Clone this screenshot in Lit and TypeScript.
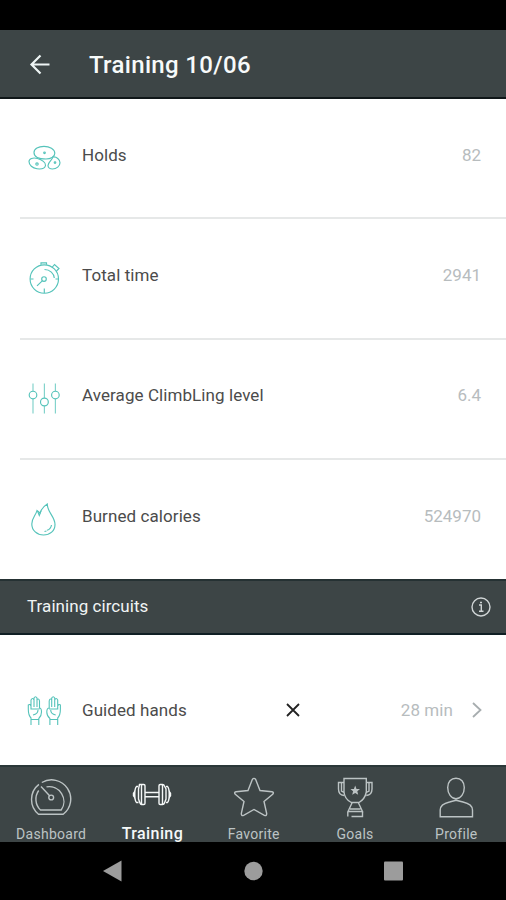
import { LitElement, html, svg, css } from "lit";
import { customElement, property } from "lit/decorators.js";

const icons: Record<string, unknown> = {
  holds: svg`
    <path d="M8 12.500C8 8.500 12.500 6.300 18 6.300S28.800 9 28.800 13.200C28.800 17 24.500 19 20 19C13.500 19 8 17 8 12.500Z"/>
    <path d="M3 21.500C3 18.500 7 17.300 11.500 18.500S20 22.500 19.500 25.500S15.500 29.300 11 28.800S3 25 3 21.500Z"/>
    <path d="M22 25.500C22 22 26.500 19.500 27 17C30.500 16.500 34 19.500 34 22.800S30.500 29 26.500 29C24 29 22 27.500 22 25.500Z"/>
    <circle cx="18.500" cy="12.800" r=".8"/><circle cx="11" cy="24" r="1.200"/><circle cx="29" cy="22.500" r=".8"/>`,
  watch: svg`
    <circle cx="18.300" cy="19" r="14.200"/><circle cx="18" cy="19" r="2.300"/>
    <path d="M16.300 20.800L11 25.800M4.500 19H7.500M18.300 28.500V33M29.500 19H32M15 4.800V2.800H20.500V4.800M26 7.500L28.500 4.500L33 8.500L30.500 11M18.500 9.500C24 9.500 28 13.500 28.300 18"/>`,
  sliders: svg`
    <path d="M7 3.500V11.200M7 18.800V33.500M18.400 3.500V18M18.400 26V33.500M29.400 3.500V11.200M29.400 18.800V33.500" opacity=".75"/>
    <circle cx="7" cy="15" r="3.800"/><circle cx="18.400" cy="22" r="3.900"/><circle cx="29.400" cy="15" r="3.800"/>`,
  flame: svg`
    <path d="M21.300 3C21 11 29 15.500 29 23.500C29 30 24 34 17.500 34S5.800 29.500 5.800 23C5.800 17 10 14 11 9.500L14 12C15.500 7.500 18 5 21.300 3Z"/>
    <path d="M11.500 10L13.300 14.500L15 10M25.500 24C25 27 23.500 28.500 21 29.300M20.500 30L18.500 30.500"/>`,
  hands: svg`
    <path d="M5 33V26C3 24 2.300 21 2.300 17V13Q4 11.500 5 14V8Q6.500 5 8 8V6Q9.500 3.500 11 6V7.500Q13 6 13.500 9V16Q15.500 16 15.500 20Q15.500 24 12.800 26.500V33M5 27.500H12.800M8 8V15M11 7V15M5 14V17H13.500M7 23Q12 22 12 18"/>
    <path d="M31.700 33V26C33.700 24 34.400 21 34.400 17V13Q33 11.500 31.700 14V8Q30.200 5 28.700 8V6Q27.200 3.500 25.700 6V7.500Q23.700 6 23.200 9V16Q20.800 16 20.800 20Q20.800 24 23.900 26.500V33M31.700 27.500H23.900M28.700 8V15M25.700 7V15M31.700 14V17H23.200M29.700 23Q24.700 22 24.700 18"/>`,
};

const tabIcons: Record<string, unknown> = {
  Dashboard: svg`
    <path d="M8.900 7.400A19.200 19.200 0 0 0 8.500 37.300H33.200A19.200 19.200 0 0 0 11.800 5.500"/>
    <path d="M8.700 13.500A15 15 0 0 0 10.500 33H31.200A14.800 14.800 0 0 0 16.500 9.900M11 9.500L19.600 18.700"/><circle cx="21.200" cy="20.500" r="2.400"/>`,
  Training: svg`
    <path d="M8.500 7.500H12.800Q14 7.500 14 8.700V26.300Q14 27.500 12.800 27.500H10.500Q9.500 27.500 9 26L7.500 22V12ZM28 8.700Q28 7.500 29.200 7.500H31.500Q33 7.500 33.500 9L35 12V22L33.500 26Q33 27.500 31.500 27.500H29.200Q28 27.500 28 26.300ZM14 15.500H28M14 19.800H28M10.500 8V27M31.500 8V27M7 9.500H5.500Q3.800 11 3.800 17.500T5.500 25.500H7.500M35 9.500H36.500Q38.200 11 38.200 17.500T36.500 25.500H35"/>
    <path class="solid" d="M4 13L1.800 16V19L4 22ZM38 13L40.200 16V19L38 22Z"/>`,
  Favorite: svg`
    <path d="M19.300 2.500Q21 .3 22.700 2.500L27 13.500L39 14.700Q41.400 15.200 39.700 17.200L31 24.500L33.700 36.500Q33.700 39.300 31.400 38.400L21 32.500L10.600 38.400Q8.300 39.300 8.300 36.500L11 24.500L2.300 17.200Q.6 15.200 3 14.700L15 13.500Z"/>`,
  Goals: svg`
    <path d="M10 1.500H32.300V15Q31 22 25 25.500H17.300Q10.500 22 10 15ZM10 5.500H4.500V12Q4.500 18 10 18.500M32.300 5.500H38V12Q38 18 32.300 18.500M18 26L14 34.500H28.500L24.500 26M13.800 34.500V39.500M17.500 39.500H28.500V34.500M16 32H26.500M7.500 5.500V14L10 15.500M35 5.500V14L32.300 15.500"/>
    <path class="solid" d="M21.200 8.500L22.500 11.900L26 12.100L23.300 14.300L24.200 17.800L21.200 15.900L18.200 17.800L19.100 14.300L16.400 12.100L19.900 11.900Z"/>`,
  Profile: svg`
    <path d="M21 1.200C26 1.200 29.300 5 29.300 10.500C29.300 16.500 25.800 21.800 21 21.800S12.700 16.500 12.700 10.500C12.700 5 16 1.200 21 1.200ZM14.500 25L21 23.300L28 25C34.500 26.500 37.500 28.500 37.500 33V39.800H5.200V33C5.200 28.500 8 26.500 14.500 25Z"/>`,
};

@customElement("stat-row")
class StatRow extends LitElement {
  @property() icon = "";
  @property() label = "";
  @property() value = "";
  static styles = css`
    :host { display: flex; box-sizing: border-box; height: 120.400px; padding-left: 20px; }
    .row { flex: 1; display: flex; align-items: center; padding: 0 25px 0 6px; border-bottom: 2px solid #e6e8e8; }
    svg { width: 36px; height: 36px; margin-bottom: 1px; fill: none; stroke: #55c3ba; stroke-width: 1.150; }
    .label { margin: 0 auto 7px 20px; font-size: 17px; letter-spacing: .08px; color: #4b4b4b; }
    .value { margin-bottom: 7px; font-size: 17px; letter-spacing: 0; color: #b7bcbe; }
  `;
  render() {
    return html`<div class="row">
      <svg viewBox="0 0 36 36">${icons[this.icon]}</svg>
      <span class="label">${this.label}</span><span class="value">${this.value}</span>
    </div>`;
  }
}

@customElement("app-root")
class AppRoot extends LitElement {
  static styles = css`
    :host { display: flex; flex-direction: column; height: 900px; overflow: hidden; background: #fff; font-family: Roboto, "Liberation Sans", sans-serif; }
    * { box-sizing: border-box; }
    svg { display: block; fill: none; }
    .status { height: 30px; background: #000; }
    .header { height: 69px; display: flex; align-items: center; padding: 0 0 0 28px; background: #3d4546; border-bottom: 2px solid #101719; color: #f7fafa; }
    .back { width: 24px; height: 24px; stroke: #eef4f4; stroke-width: 2.200; }
    .title { margin: 2px 0 0 37px; font-size: 24px; font-weight: 500; letter-spacing: .33px; line-height: 30px; }
    .stats { height: 480px; overflow: hidden; }
    .section { height: 56px; display: flex; align-items: center; justify-content: space-between; padding: 0 15px 2px 27px; background: #3d4546; border-top: 2px solid #253133; border-bottom: 2px solid #101f24; color: #f1f4f4; font-size: 17px; letter-spacing: .06px; }
    .info { width: 20px; height: 20px; margin-top: 2px; stroke: #d0d5d6; stroke-width: 1.400; }
    .circuit { height: 130px; display: grid; grid-template-columns: 36px 20px 1fr auto auto; align-items: center; padding: 19px 23px 0 26px; font-size: 17px; color: #4b4b4b; letter-spacing: .08px; }
    .hands { width: 36px; height: 36px; margin-top: 1px; stroke: #55c3ba; stroke-width: 1.100; }
    .name { grid-column: 3; display: flex; align-items: center; }
    .cross { width: 16px; height: 16px; stroke: #222; stroke-width: 1.800; margin-left: 98px; }
    .time { color: #b7bcbe; }
    .chevron { width: 12px; height: 18px; stroke: #a7adaf; stroke-width: 1.800; margin-left: 18px; }
    .tabs { height: 77px; display: grid; grid-template-columns: repeat(5, 101.300px); background: #3d4546; border-top: 2px solid #2b3839; }
    .tab { display: flex; flex-direction: column; align-items: center; color: #bcc3c4; font-size: 14px; letter-spacing: .28px; white-space: nowrap; }
    .tab svg { width: 42px; height: 42px; margin: 10px 0 0 1px; stroke: currentColor; stroke-width: 1.400; flex: none; }
    .tab .solid { fill: currentColor; stroke: none; }
    .tab span { margin: 6px 0 0 1px; line-height: 18px; }
    .tab.active { color: #f5f8f8; font-weight: 500; font-size: 16px; letter-spacing: .4px; }
    .nav { height: 58px; display: flex; justify-content: space-between; align-items: center; padding: 0 102px; background: #000; }
    .nav svg { width: 22px; height: 22px; fill: #9c9c9c; }
  `;

  render() {
    return html`
      <div class="status"></div>
      <header class="header">
        <svg class="back" viewBox="0 0 24 24"><path d="M21.500 12.500H3.500M12.500 3.500L3.500 12.500L12.500 21.500"/></svg>
        <span class="title">Training 10/06</span>
      </header>
      <section class="stats">
        <stat-row icon="holds" label="Holds" value="82"></stat-row>
        <stat-row icon="watch" label="Total time" value="2941"></stat-row>
        <stat-row icon="sliders" label="Average ClimbLing level" value="6.4"></stat-row>
        <stat-row icon="flame" label="Burned calories" value="524970"></stat-row>
      </section>
      <div class="section">
        <span>Training circuits</span>
        <svg class="info" viewBox="0 0 20 20"><circle cx="10" cy="10" r="9"/><path d="M8 8H10.300V14M8 14.300H12.500M9 5.500H11" /></svg>
      </div>
      <div class="circuit">
        <svg class="hands" viewBox="0 0 36 36">${icons.hands}</svg>
        <span class="name">Guided hands
          <svg class="cross" viewBox="0 0 16 16"><path d="M2 2L14 14M14 2L2 14"/></svg>
        </span>
        <span class="time">28 min</span>
        <svg class="chevron" viewBox="0 0 12 18"><path d="M2 2L9.500 9L2 16"/></svg>
      </div>
      <nav class="tabs">
        ${Object.entries(tabIcons).map(([name, art]) => html`
          <div class="tab ${name === "Training" ? "active" : ""}">
            <svg viewBox="0 0 42 42">${art}</svg><span>${name}</span>
          </div>`)}
      </nav>
      <div class="nav">
        <svg viewBox="0 0 22 22"><path d="M1 11L19.500 .5V21.500Z"/></svg>
        <svg viewBox="0 0 22 22"><circle cx="11.500" cy="11" r="9.200"/></svg>
        <svg viewBox="0 0 22 22"><rect x="2" y="1.500" width="19" height="19" rx="1"/></svg>
      </div>`;
  }
}
